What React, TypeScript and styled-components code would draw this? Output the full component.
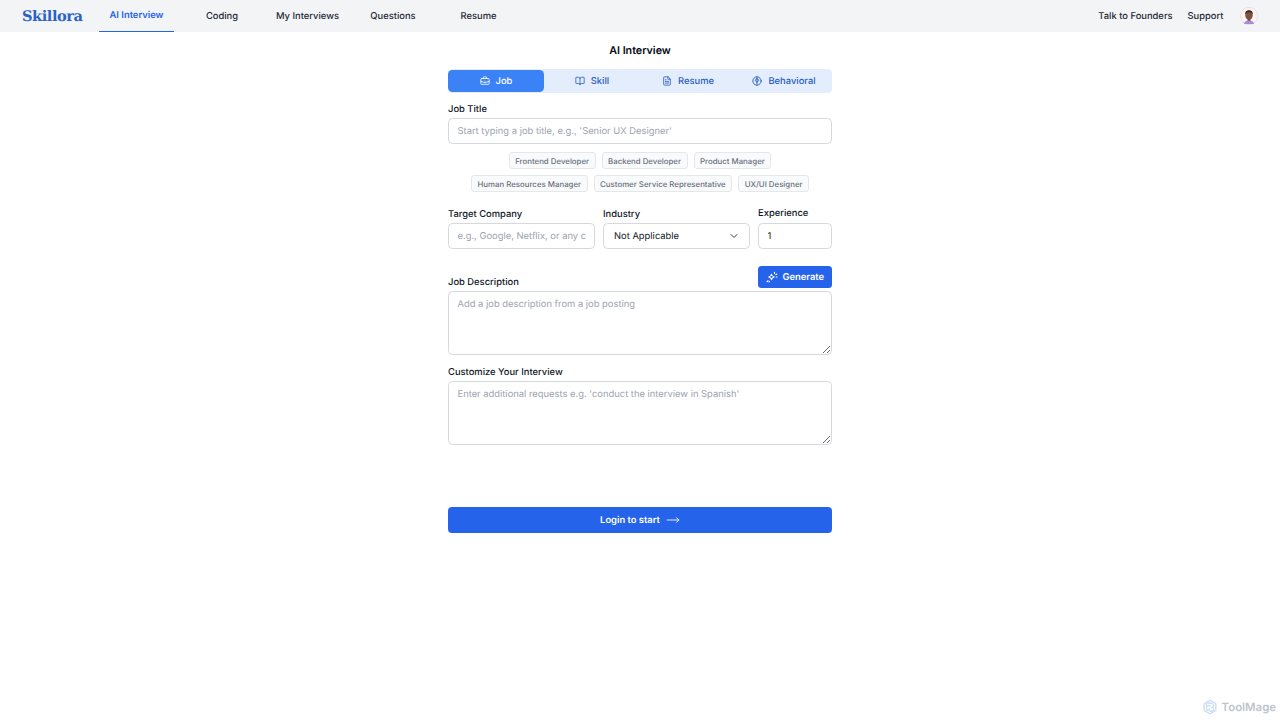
import * as React from "react";
import styled, { createGlobalStyle } from "styled-components";
import { BookOpen, BriefcaseBusiness, ChevronDown, FileText, MoveRight } from "lucide-react";

const Global = createGlobalStyle`
  html, body { margin: 0; padding: 0; background: #fff; }
  body {
    font-family: Inter, "Liberation Sans", sans-serif;
    color: #111827;
    text-rendering: geometricPrecision;
  }
  input, textarea, button { text-rendering: geometricPrecision; }
  * { box-sizing: border-box; }
`;

const Page = styled.div`
  width: 1280px;
  height: 720px;
  position: relative;
  overflow: hidden;
`;

/* top bar */
const Header = styled.header`
  height: 32px;
  background: #f3f4f6;
  display: flex;
  align-items: center;
  padding: 0 22px;
`;
const Logo = styled.div`
  font-family: "DejaVu Serif", "Liberation Serif", serif;
  font-weight: 700;
  font-size: 14.6px;
  letter-spacing: -0.45px;
  color: #2b62c9;
  width: 77px;
`;
const Nav = styled.nav`
  display: grid;
  grid-template-columns: repeat(5, 75px);
  column-gap: 10.5px;
  height: 32px;
`;
const NavItem = styled.a<{ $active?: boolean }>`
  display: flex;
  align-items: center;
  justify-content: center;
  font-size: 9.4px;
  font-weight: ${(p) => (p.$active ? 600 : 500)};
  color: ${(p) => (p.$active ? "#2563eb" : "#1f2937")};
  border-bottom: ${(p) => (p.$active ? "1.5px solid #2563eb" : "none")};
`;
const HeaderRight = styled.div`
  margin-left: auto;
  display: flex;
  align-items: center;
  gap: 15px;
  font-size: 9.4px;
  font-weight: 500;
  color: #1f2937;
`;
const AvatarWrap = styled.div`
  width: 18px;
  height: 18px;
  margin-left: 1.5px;
`;

/* form column */
const Form = styled.main`
  width: 384px;
  margin: 0 auto;
  display: flex;
  flex-direction: column;
`;
const Title = styled.h1`
  margin: 11px 0 0;
  height: 15px;
  line-height: 15px;
  text-align: center;
  font-size: 10.7px;
  font-weight: 600;
  color: #030712;
`;
const Tabs = styled.div`
  margin-top: 11px;
  height: 24px;
  background: #e3edfc;
  border-radius: 4.5px;
  display: grid;
  grid-template-columns: repeat(4, 1fr);
  align-items: center;
`;
const Tab = styled.button<{ $active?: boolean }>`
  height: 21.5px;
  border: 0;
  padding: 0;
  border-radius: 4.5px;
  background: ${(p) => (p.$active ? "#3b82f6" : "transparent")};
  color: ${(p) => (p.$active ? "#fff" : "#2b5fc0")};
  font: 500 9.4px Inter, sans-serif;
  display: flex;
  align-items: center;
  justify-content: center;
  gap: 6px;
`;
const Label = styled.label<{ $top?: number; $bottom?: number }>`
  display: block;
  height: 13px;
  line-height: 15px;
  margin-top: ${(p) => p.$top ?? 0}px;
  margin-bottom: ${(p) => p.$bottom ?? 0}px;
  font-size: 9.4px;
  font-weight: 500;
  color: #111827;
`;
const TextInput = styled.input`
  width: 100%;
  height: 26px;
  margin-top: 3px;
  padding: 0 8.5px;
  background: #fff;
  border: 1px solid #d5d8dd;
  border-radius: 4.5px;
  font: 400 9.4px Inter, sans-serif;
  color: #111827;
  outline: none;
  &::placeholder { color: #9ca3af; opacity: 1; }
`;
const Chips = styled.div`
  margin-top: 8px;
  display: flex;
  flex-wrap: wrap;
  justify-content: center;
  gap: 6px;
`;
const Chip = styled.span`
  height: 17px;
  padding: 0 5.5px;
  display: flex;
  align-items: center;
  font-size: 7.85px;
  font-weight: 500;
  color: #6b7280;
  background: #f9fafb;
  border: 1px solid #e5e7eb;
  border-radius: 3px;
`;
const Row = styled.div`
  margin-top: 14px;
  display: grid;
  grid-template-columns: 147px 147px 74px;
  column-gap: 8px;
  align-items: end;
`;
const SelectBox = styled.div`
  height: 26px;
  margin-top: 3px;
  padding: 0 9px 0 10px;
  display: flex;
  align-items: center;
  justify-content: space-between;
  border: 1px solid #d5d8dd;
  border-radius: 4.5px;
  font-size: 9.4px;
  color: #111827;
`;
const DescHead = styled.div`
  margin-top: 17px;
  display: flex;
  justify-content: space-between;
  align-items: flex-end;
`;
const GenerateButton = styled.button`
  width: 74px;
  height: 22px;
  margin-bottom: 3px;
  border: 0;
  padding: 0;
  border-radius: 3.5px;
  background: #2563eb;
  color: #fff;
  font: 600 9.4px Inter, sans-serif;
  display: flex;
  align-items: center;
  justify-content: center;
  gap: 4.5px;
`;
const TextArea = styled.textarea<{ $top?: number }>`
  display: block;
  width: 100%;
  height: 64px;
  margin-top: ${(p) => p.$top ?? 0}px;
  padding: 6px 8.5px;
  border: 1px solid #d5d8dd;
  border-radius: 4.5px;
  font: 400 9.4px/13px Inter, sans-serif;
  outline: none;
  &::placeholder { color: #9ca3af; opacity: 1; }
`;
const LoginButton = styled.button`
  margin-top: 62px;
  height: 26px;
  border: 0;
  border-radius: 4px;
  background: #2563eb;
  color: #fff;
  font: 600 9.4px Inter, sans-serif;
  display: flex;
  align-items: center;
  justify-content: center;
  gap: 6px;
`;

/* watermark sits over the page corner */
const Watermark = styled.div`
  position: absolute;
  right: 4px;
  bottom: 5px;
  display: flex;
  align-items: center;
  gap: 4px;
  font-size: 11.4px;
  font-weight: 600;
  color: #bcc4ce;
`;

const BehavioralIcon = () => (
  <svg width="10" height="10" viewBox="0 0 24 24" fill="none" stroke="currentColor" strokeWidth="2.2" strokeLinecap="round" strokeLinejoin="round">
    <circle cx="12" cy="12" r="10" />
    <path d="M12 2v20" />
    <path d="M12 7c-2.5 0-4 1.500-4 3.500S10 14 12 14" />
    <path d="M12 7c2.500 0 4 1.500 4 3.500S14 14 12 14" />
  </svg>
);

const GenerateIcon = () => (
  <svg width="12" height="12" viewBox="0 0 24 24" fill="none" stroke="currentColor" strokeWidth="2.2" strokeLinecap="round" strokeLinejoin="round">
    <path d="M11 6.500c.7 3.500 2 4.800 5.500 5.500-3.500.7-4.800 2-5.500 5.500-.7-3.500-2-4.800-5.500-5.500 3.500-.7 4.800-2 5.500-5.500z" />
    <path d="M17 2.500v2.500M21.500 6 19.500 7.500M22 12h-1.500M4 19.500 2 21.500M7 20.500l-1 1.500" />
  </svg>
);

const Avatar = () => (
  <svg width="18" height="18" viewBox="0 0 18 18">
    <circle cx="9" cy="9" r="8.600" fill="#fdf6f6" stroke="#e8cdd2" strokeWidth="0.6" />
    <circle cx="9" cy="9" r="6.800" fill="none" stroke="#f3e0e2" strokeWidth="0.5" />
    <path d="M4 17c.5-2.600 2.500-3.800 5-3.800s4.500 1.200 5 3.800z" fill="#a78bda" />
    <rect x="7.600" y="10.500" width="2.800" height="3.200" fill="#6b3f30" />
    <ellipse cx="9" cy="8.200" rx="3.700" ry="4.200" fill="#80503d" />
    <path d="M5.200 7.500c-.3-3 1.800-4.300 3.800-4.300s4.100 1.300 3.700 4.300c-1-1.800-2.200-2.200-3.800-2.200s-2.800.6-3.700 2.200z" fill="#3a2420" />
  </svg>
);

const ToolMageIcon = () => (
  <svg width="16" height="16" viewBox="0 0 24 24" fill="none" stroke="#c6dcf3" strokeWidth="1.800" strokeLinejoin="round" strokeLinecap="round">
    <path d="M12 1.800 20.800 6.900v10.200L12 22.200 3.200 17.100V6.900z" />
    <path d="M12 6.500c2.500-1 5 .5 5.500 3 .4 2-1 3.500-3 3.500" />
    <path d="M17.500 14.500c.3 2.600-1.800 4.500-4.300 4-2-.4-3-2-2.500-4" />
    <path d="M9 17.500c-2.300-1-3.200-3.700-1.800-5.800 1.100-1.700 3-2 4.800-1" />
    <path d="M6.500 9.500c-.3-2.600 2-4.500 5.500-3" />
  </svg>
);

const tabs = [
  { label: "Job", icon: <BriefcaseBusiness size={10} />, active: true },
  { label: "Skill", icon: <BookOpen size={10} /> },
  { label: "Resume", icon: <FileText size={10} /> },
  { label: "Behavioral", icon: <BehavioralIcon /> },
];

const chipRows = [
  "Frontend Developer",
  "Backend Developer",
  "Product Manager",
  "Human Resources Manager",
  "Customer Service Representative",
  "UX/UI Designer",
];

const App = () => {
  return (
    <Page>
      <Global />
      <Header>
        <Logo>Skillora</Logo>
        <Nav>
          <NavItem $active>AI Interview</NavItem>
          <NavItem>Coding</NavItem>
          <NavItem>My Interviews</NavItem>
          <NavItem>Questions</NavItem>
          <NavItem>Resume</NavItem>
        </Nav>
        <HeaderRight>
          <span>Talk to Founders</span>
          <span>Support</span>
          <AvatarWrap>
            <Avatar />
          </AvatarWrap>
        </HeaderRight>
      </Header>

      <Form>
        <Title>AI Interview</Title>
        <Tabs>
          {tabs.map((t) => (
            <Tab key={t.label} $active={t.active}>
              {t.icon}
              {t.label}
            </Tab>
          ))}
        </Tabs>

        <Label $top={9}>Job Title</Label>
        <TextInput placeholder="Start typing a job title, e.g., 'Senior UX Designer'" />

        <Chips>
          {chipRows.map((c) => (
            <Chip key={c}>{c}</Chip>
          ))}
        </Chips>

        <Row>
          <div>
            <Label>Target Company</Label>
            <TextInput placeholder="e.g., Google, Netflix, or any company" />
          </div>
          <div>
            <Label>Industry</Label>
            <SelectBox>
              Not Applicable
              <ChevronDown size={12} color="#374151" />
            </SelectBox>
          </div>
          <div>
            <Label $bottom={1}>Experience</Label>
            <TextInput defaultValue="1" />
          </div>
        </Row>

        <DescHead>
          <Label $bottom={3.5}>Job Description</Label>
          <GenerateButton>
            <GenerateIcon />
            Generate
          </GenerateButton>
        </DescHead>
        <TextArea placeholder="Add a job description from a job posting" />

        <Label $top={10}>Customize Your Interview</Label>
        <TextArea $top={3} placeholder="Enter additional requests e.g. 'conduct the interview in Spanish'" />

        <LoginButton>
          Login to start
          <MoveRight size={14} strokeWidth={1.5} />
        </LoginButton>
      </Form>

      <Watermark>
        <ToolMageIcon />
        ToolMage
      </Watermark>
    </Page>
  );
};
export default App;
